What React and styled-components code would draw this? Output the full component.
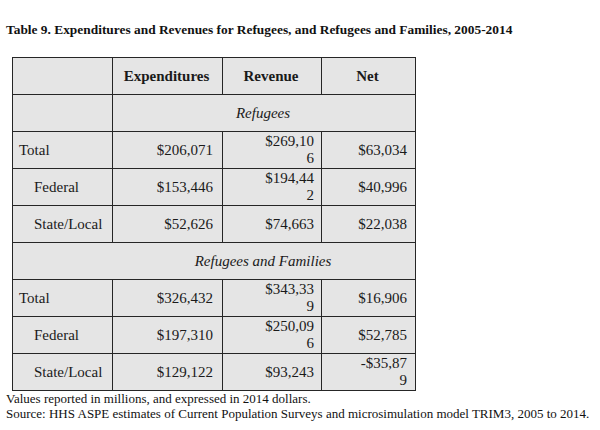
import React from "react";
import styled, { createGlobalStyle } from "styled-components";

const GlobalStyle = createGlobalStyle`
  html, body {
    margin: 0;
    padding: 0;
    background: #fff;
  }
`;

const Page = styled.div`
  width: 600px;
  height: 430px;
  padding: 22px 0 0 6px;
  box-sizing: border-box;
  font-family: "Liberation Serif", "Times New Roman", serif;
  color: #111;
`;

const Title = styled.h1`
  margin: 0 0 19px;
  font-size: 13.4px;
  line-height: 16px;
  font-weight: bold;
`;

const Table = styled.table`
  margin-left: 6px;
  border-collapse: collapse;
  table-layout: fixed;
  width: 403px;
  font-size: 15px;
  border-top: 1.5px solid #555;
  border-right: 1.5px solid #a896cc;
`;

const Cell = styled.td`
  height: 37px;
  box-sizing: border-box;
  padding: 0 ${(p) => p.$pr || 8}px 0 ${(p) => p.$pl || 6}px;
  background: #e5e5e5;
  border: 1.5px solid #262626;
  line-height: 17px;
  vertical-align: middle;
  text-align: ${(p) => p.$align || "right"};
  word-break: break-all;
  font-weight: ${(p) => (p.$bold ? "bold" : "normal")};
  font-style: ${(p) => (p.$italic ? "italic" : "normal")};
  color: #1a1a1a;
`;

const columns = [100, 110, 99, 94];

const sections = [
  {
    name: "Refugees",
    full: false,
    rows: [
      ["Total", "$206,071", "$269,106", "$63,034"],
      ["Federal", "$153,446", "$194,442", "$40,996"],
      ["State/Local", "$52,626", "$74,663", "$22,038"],
    ],
  },
  {
    name: "Refugees and Families",
    full: true,
    rows: [
      ["Total", "$326,432", "$343,339", "$16,906"],
      ["Federal", "$197,310", "$250,096", "$52,785"],
      ["State/Local", "$129,122", "$93,243", "-$35,879"],
    ],
  },
];

const Note = styled.p`
  margin: 0;
  font-size: 13px;
  line-height: 15px;
  color: #111;
`;

export default function App() {
  return (
    <Page>
      <GlobalStyle />
      <Title>
        Table 9. Expenditures and Revenues for Refugees, and Refugees and
        Families, 2005-2014
      </Title>
      <Table>
        <colgroup>
          {columns.map((w, i) => (
            <col key={i} style={{ width: w }} />
          ))}
        </colgroup>
        <tbody>
          <tr>
            <Cell />
            <Cell $bold $align="center">Expenditures</Cell>
            <Cell $bold $align="center">Revenue</Cell>
            <Cell $bold $align="center">Net</Cell>
          </tr>
          {sections.map((s) => (
            <React.Fragment key={s.name}>
              <tr>
                {s.full ? (
                  <Cell colSpan={4} $italic $align="center" $pl={106}>
                    {s.name}
                  </Cell>
                ) : (
                  <>
                    <Cell />
                    <Cell colSpan={3} $italic $align="center">
                      {s.name}
                    </Cell>
                  </>
                )}
              </tr>
              {s.rows.map(([label, exp, rev, net]) => (
                <tr key={label}>
                  <Cell $align="left" $pl={label === "Total" ? 6 : 21}>
                    {label}
                  </Cell>
                  <Cell $pr={9}>{exp}</Cell>
                  <Cell $pl={40} $pr={7}>{rev}</Cell>
                  <Cell $pl={34} $pr={8}>{net}</Cell>
                </tr>
              ))}
            </React.Fragment>
          ))}
        </tbody>
      </Table>
      <Note>Values reported in millions, and expressed in 2014 dollars.</Note>
      <Note>
        Source: HHS ASPE estimates of Current Population Surveys and
        microsimulation model TRIM3, 2005 to 2014.
      </Note>
    </Page>
  );
}
